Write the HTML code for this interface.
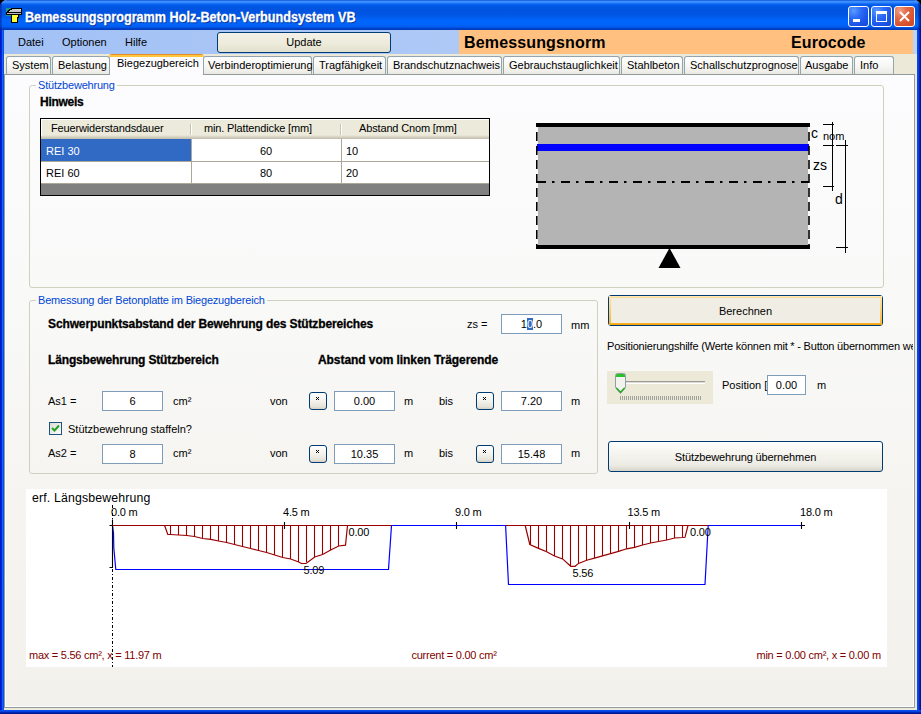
<!DOCTYPE html>
<html><head><meta charset="utf-8">
<style>
*{box-sizing:border-box}
html,body{margin:0;padding:0;width:921px;height:714px;overflow:hidden;background:#000}
body{position:relative;font-family:"Liberation Sans",sans-serif;font-size:11px;color:#000}
.a{position:absolute}
.t{position:absolute;white-space:pre;line-height:13px;font-size:11px}
.b{font-weight:bold;-webkit-text-stroke-width:0.3px}
#win{position:absolute;left:0;top:0;width:921px;height:714px;border-radius:7px 7px 0 0;overflow:hidden;
 background:linear-gradient(to right,#0019cf 0,#0019cf 1px,#0028d8 1px,#0028d8 2px,#1464f0 2px,#1464f0 3px,#0a4fe6 3px,#0a4fe6 4px,#ece9d8 4px,#ece9d8 917px,#0848f0 917px,#0848f0 918px,#0640e6 918px,#0640e6 919px,#0025b8 919px,#0025b8 920px,#001590 920px)}
#title{position:absolute;left:0;top:0;width:921px;height:30px;
 background:linear-gradient(to bottom,#0042c8 0,#3d8cff 1px,#3d95ff 2px,#2a7dff 3px,#0a64f0 4px,#0058e6 6px,#0053df 10px,#0055e3 14px,#005cec 17px,#0066ff 21px,#0063f8 25px,#005cf0 27px,#0049d6 28px,#003dbd 29px,#003dbd 30px)}
#client{position:absolute;left:4px;top:30px;width:913px;height:680px;background:#ece9d8}
#bottomframe{position:absolute;left:0;top:710px;width:921px;height:4px;background:linear-gradient(to bottom,#0a4ff0 0,#0a4ff0 1px,#0640de 1px,#0640de 2px,#0026b8 2px,#0026b8 3px,#00168e 3px)}

.menu{position:absolute;left:4px;top:30px;width:913px;height:24px;background:linear-gradient(to right,#a2c1f5 0,#aec9f6 50%,#bcd3f8 100%)}
.tab{position:absolute;top:56px;height:18px;border:1px solid #91a4b0;border-bottom:none;border-radius:3px 3px 0 0;background:linear-gradient(to bottom,#fefefe 0,#f9f9f7 40%,#efeee9 85%,#e8e7e0 100%)}
.tab span{position:absolute;top:2px;line-height:13px;white-space:pre}
.tabsel{position:absolute;top:54px;height:21px;border:none;border-radius:3px 3px 0 0;background:#fcfcfe;z-index:3}
.tabsel:before{content:"";position:absolute;left:-1px;right:-1px;top:0;height:3px;border-radius:3px 3px 0 0;background:linear-gradient(to bottom,#e68b2c 0,#e68b2c 1px,#ffc73c 1px,#ffc73c 3px)}
.panel{position:absolute;left:4px;top:74px;width:911px;height:634px;border:1px solid #919b9c;box-shadow:inset 1px 0 0 #fff,inset -1px -1px 0 #fff;background:linear-gradient(to bottom,#fcfcfe 0,#f9f9f8 35%,#f5f4f0 70%,#f2f1ec 100%);z-index:2}
.btn{position:absolute;border:1px solid #003c74;border-radius:3px;background:linear-gradient(to bottom,#fff 0,#f7f6f1 30%,#ecebe4 80%,#d8d3c8 100%)}
.btn span{position:absolute;left:0;right:0;text-align:center;white-space:pre;line-height:13px}

.grp{position:absolute;border:1px solid #d0d0bf;border-radius:3px;z-index:4}
.gt{position:absolute;white-space:pre;line-height:13px;color:#0046d5;padding:0 2px;z-index:5}
.z{z-index:6}
.inp{position:absolute;border:1px solid #7f9db9;background:#fff;z-index:6}
.inp span{position:absolute;left:0;right:0;text-align:center;white-space:pre;line-height:13px}

.sb{position:absolute;width:18px;height:18px;border:1px solid #003c74;border-radius:3px;background:linear-gradient(to bottom,#fff 0,#f3f2ec 50%,#e6e3d8 85%,#d6d0c5 100%);z-index:6}
.sb span{position:absolute;left:0;right:0;top:1px;text-align:center;font-size:10px;line-height:10px}
</style></head><body>
<div id="win">
 <div id="title"><div class="a" style="left:0;top:0;width:2px;height:30px;background:linear-gradient(to right,rgba(0,0,110,.45),rgba(0,0,110,.2))"></div><div class="a" style="left:918px;top:0;width:3px;height:30px;background:linear-gradient(to right,rgba(0,0,110,.15),rgba(0,0,90,.5) 50%,rgba(0,0,70,.7))"></div></div>

 <svg class="a" style="left:0;top:0" width="30" height="30" viewBox="0 0 30 30" shape-rendering="crispEdges">
  <rect x="6" y="8" width="5" height="8" fill="#1e9a8c"/>
  <path d="M11 8H22V15H6V12H7V11H8V10H9V9H11Z" fill="#000"/>
  <path d="M12 9H21V12H9V11H10V10H12Z" fill="#c8c8c8"/>
  <path d="M15 9H21V10H15Z" fill="#dcd6cc"/>
  <rect x="7" y="13" width="14" height="1" fill="#bdbdbd"/>
  <path d="M11 15H19V18H18V23H11Z" fill="#000"/>
  <path d="M12 15H18V17H17V22H12Z" fill="#ffff30"/>
 </svg>
 <div class="t b" style="left:26px;top:10px;font-size:14px;line-height:16px;color:#0a1a60;opacity:.6;transform-origin:0 0;transform:scaleX(0.902)">Bemessungsprogramm Holz-Beton-Verbundsystem VB</div>
 <div class="t b" style="left:25px;top:9px;font-size:14px;line-height:16px;color:#fff;transform-origin:0 0;transform:scaleX(0.902)">Bemessungsprogramm Holz-Beton-Verbundsystem VB</div>
 <div class="a" style="left:848px;top:6px;width:21px;height:21px;border:1px solid #fff;border-radius:3px;background:radial-gradient(circle at 25% 20%,#5a9bff 0,#2c6cf6 35%,#1a54e8 70%,#1648d0 100%)">
   <div class="a" style="left:4px;top:12px;width:7px;height:3px;background:#fff"></div></div>
 <div class="a" style="left:871px;top:6px;width:21px;height:21px;border:1px solid #fff;border-radius:3px;background:radial-gradient(circle at 25% 20%,#5a9bff 0,#2c6cf6 35%,#1a54e8 70%,#1648d0 100%)">
   <div class="a" style="left:4px;top:4px;width:11px;height:11px;border:1px solid #fff;border-top-width:3px"></div></div>
 <div class="a" style="left:894px;top:6px;width:21px;height:21px;border:1px solid #fff;border-radius:3px;background:radial-gradient(circle at 25% 20%,#f0a088 0,#e26a46 35%,#d8512c 70%,#c84a20 100%)">
   <svg class="a" style="left:4px;top:4px" width="11" height="11" viewBox="0 0 11 11"><path d="M1 1L10 10M10 1L1 10" stroke="#fff" stroke-width="2"/></svg></div>
 <div id="client"></div>

 <div class="menu"></div>
 <div class="t" style="left:18px;top:36px">Datei</div>
 <div class="t" style="left:62px;top:36px">Optionen</div>
 <div class="t" style="left:125px;top:36px">Hilfe</div>
 <div class="btn" style="left:217px;top:32px;width:174px;height:21px;background:linear-gradient(to bottom,#f4f2e9 0,#ecead9 60%,#e2dfcf 100%)"><span style="top:3px">Update</span></div>
 <div class="a" style="left:459px;top:30px;width:454px;height:24px;background:#ffc080"></div>
 <div class="t" style="left:464px;top:33px;font-size:16px;line-height:20px;font-weight:bold;letter-spacing:0.15px">Bemessungsnorm</div>
 <div class="t" style="left:791px;top:33px;font-size:16px;line-height:20px;font-weight:bold;letter-spacing:0.1px">Eurocode</div>
 <div class="tab" style="left:6px;width:45px"><span style="left:5px">System</span></div>
 <div class="tab" style="left:52px;width:58px"><span style="left:5px">Belastung</span></div>
 <div class="tabsel" style="left:110px;width:93px"><span class="t" style="left:7px;top:3px">Biegezugbereich</span></div>
 <div class="tab" style="left:203px;width:109px"><span style="left:4px">Verbinderoptimierung</span></div>
 <div class="tab" style="left:313px;width:73px"><span style="left:5px">Tragfähigkeit</span></div>
 <div class="tab" style="left:387px;width:115px"><span style="left:5px">Brandschutznachweis</span></div>
 <div class="tab" style="left:503px;width:117px"><span style="left:5px">Gebrauchstauglichkeit</span></div>
 <div class="tab" style="left:621px;width:62px"><span style="left:5px">Stahlbeton</span></div>
 <div class="tab" style="left:684px;width:115px"><span style="left:5px">Schallschutzprognose</span></div>
 <div class="tab" style="left:800px;width:53px"><span style="left:4px">Ausgabe</span></div>
 <div class="tab" style="left:854px;width:40px"><span style="left:5px">Info</span></div>
 <div class="panel" id="panel"></div>

 <div class="grp" style="left:29px;top:85px;width:855px;height:203px"></div>
 <div class="gt" style="left:36px;top:79px;background:#fcfcfe;letter-spacing:-0.2px">Stützbewehrung</div>
 <div class="t b z" style="left:40px;top:96px;font-size:12px;letter-spacing:-0.28px">Hinweis</div>
 <div class="a z" style="left:40px;top:118px;width:450px;height:78px;border:1px solid #000;background:#808080">
   <div class="a" style="left:0;top:0;width:448px;height:20px;background:linear-gradient(to bottom,#fff 0,#fff 1px,#ebeadb 1px,#ebeadb 16px,#e2dece 17px,#d6d2c2 18px,#cbc7b8 19px,#c0bcab 20px)"></div><div class="a" style="left:0;top:0;width:1px;height:17px;background:#fff"></div>
   <div class="a" style="left:149px;top:5px;width:1px;height:11px;background:#c7c5b2"></div>
   <div class="a" style="left:150px;top:5px;width:1px;height:11px;background:#fff"></div>
   <div class="a" style="left:299px;top:5px;width:1px;height:11px;background:#c7c5b2"></div>
   <div class="a" style="left:300px;top:5px;width:1px;height:11px;background:#fff"></div>
   <div class="t" style="left:10px;top:3px;letter-spacing:-0.15px">Feuerwiderstandsdauer</div>
   <div class="t" style="left:163px;top:3px;letter-spacing:-0.15px">min. Plattendicke [mm]</div>
   <div class="t" style="left:318px;top:3px;letter-spacing:-0.15px">Abstand Cnom [mm]</div>
   <div class="a" style="left:0;top:20px;width:448px;height:44px;background:#fff"></div>
   <div class="a" style="left:0;top:20px;width:150px;height:22px;background:#316ac5"></div>
   <div class="a" style="left:150px;top:20px;width:1px;height:44px;background:#aca899"></div>
   <div class="a" style="left:300px;top:20px;width:1px;height:44px;background:#aca899"></div>
   <div class="a" style="left:0;top:42px;width:448px;height:1px;background:#aca899"></div>
   <div class="a" style="left:0;top:64px;width:448px;height:1px;background:#aca899"></div>
   <div class="t" style="left:5px;top:26px;color:#fff">REI 30</div>
   <div class="t" style="left:150px;width:150px;top:26px;text-align:center">60</div>
   <div class="t" style="left:305px;top:26px">10</div>
   <div class="t" style="left:5px;top:48px">REI 60</div>
   <div class="t" style="left:150px;width:150px;top:48px;text-align:center">80</div>
   <div class="t" style="left:305px;top:48px">20</div>
 </div>
 <svg class="a z" style="left:520px;top:110px" width="340" height="165" viewBox="520 110 340 165">
  <rect x="538" y="124" width="270" height="122" fill="#b4b4b4"/>
  <rect x="536" y="123" width="274" height="4" fill="#000"/>
  <rect x="536" y="245" width="274" height="4" fill="#000"/>
  <rect x="537" y="144" width="272" height="7" fill="#0000ff"/>
  <line x1="536.8" y1="126" x2="536.8" y2="245" stroke="#000" stroke-width="1.6" stroke-dasharray="9 5" stroke-dashoffset="8"/>
  <line x1="809" y1="126" x2="809" y2="245" stroke="#000" stroke-width="1.6" stroke-dasharray="9 5" stroke-dashoffset="8"/>
  <line x1="537" y1="182" x2="809" y2="182" stroke="#000" stroke-width="2" stroke-dasharray="9 6 2.5 6.5"/>
  <path d="M669.5 248 L680.5 268 L658.5 268 Z" fill="#000"/>
  <g stroke="#000" stroke-width="1" fill="none">
   <line x1="832.5" y1="122" x2="832.5" y2="191"/>
   <line x1="823" y1="124.5" x2="834" y2="124.5"/>
   <line x1="823" y1="145.5" x2="834" y2="145.5"/>
   <line x1="823" y1="186.5" x2="834" y2="186.5"/>
   <line x1="845.5" y1="140" x2="845.5" y2="253"/>
   <line x1="836" y1="145.5" x2="848" y2="145.5"/>
   <line x1="836" y1="247.5" x2="848" y2="247.5"/>
  </g>
  <text x="811" y="138" font-family="Liberation Sans" font-size="14">c</text>
  <text x="823" y="140" font-family="Liberation Sans" font-size="11">nom</text>
  <text x="813" y="170" font-family="Liberation Sans" font-size="14">zs</text>
  <text x="835" y="204" font-family="Liberation Sans" font-size="14">d</text>
 </svg>

 <div class="grp" style="left:29px;top:300px;width:569px;height:174px"></div>
 <div class="gt" style="left:36px;top:294px;background:#f9f9f8;letter-spacing:-0.2px">Bemessung der Betonplatte im Biegezugbereich</div>
 <div class="t b z" style="left:48px;top:318px;font-size:12px;letter-spacing:-0.12px">Schwerpunktsabstand der Bewehrung des Stützbereiches</div>
 <div class="t z" style="left:467px;top:318px">zs =</div>
 <div class="inp" style="left:501px;top:314px;width:61px;height:20px"><span style="top:3px"><span style="position:static">1</span><span style="position:static;background:#316ac5;color:#fff">0</span><span style="position:static">.0</span></span></div>
 <div class="t z" style="left:571px;top:319px">mm</div>
 <div class="t b z" style="left:48px;top:354px;font-size:12px;letter-spacing:-0.15px">Längsbewehrung Stützbereich</div>
 <div class="t b z" style="left:318px;top:354px;font-size:12px;letter-spacing:-0.07px">Abstand vom linken Trägerende</div>

 <div class="t z" style="left:48px;top:395px">As1 =</div>
 <div class="inp" style="left:102px;top:391px;width:61px;height:20px"><span style="top:3px">6</span></div>
 <div class="t z" style="left:173px;top:395px">cm²</div>
 <div class="t z" style="left:270px;top:395px">von</div>
 <div class="sb" style="left:309px;top:392px"><svg class="a" style="left:6px;top:4px" width="5" height="5" viewBox="0 0 5 5" shape-rendering="crispEdges"><path d="M0 0h1v1h-1z M2 0h1v1h-1z M1 1h1v1h-1z M0 2h1v1h-1z M2 2h1v1h-1z" fill="#000"/></svg></div>
 <div class="inp" style="left:334px;top:391px;width:61px;height:20px"><span style="top:3px">0.00</span></div>
 <div class="t z" style="left:404px;top:395px">m</div>
 <div class="t z" style="left:439px;top:395px">bis</div>
 <div class="sb" style="left:476px;top:392px"><svg class="a" style="left:6px;top:4px" width="5" height="5" viewBox="0 0 5 5" shape-rendering="crispEdges"><path d="M0 0h1v1h-1z M2 0h1v1h-1z M1 1h1v1h-1z M0 2h1v1h-1z M2 2h1v1h-1z" fill="#000"/></svg></div>
 <div class="inp" style="left:501px;top:391px;width:61px;height:20px"><span style="top:3px">7.20</span></div>
 <div class="t z" style="left:571px;top:395px">m</div>

 <div class="a z" style="left:49px;top:422px;width:13px;height:13px;border:1px solid #1c5180;background:linear-gradient(135deg,#dcdcd7 0,#fcfcfb 100%)">
  <svg class="a" style="left:1px;top:1px" width="9" height="9" viewBox="0 0 9 9"><path d="M1 4 L3.5 6.5 L8 1.5" stroke="#21a121" stroke-width="2" fill="none"/></svg></div>
 <div class="t z" style="left:68px;top:423px">Stützbewehrung staffeln?</div>

 <div class="t z" style="left:48px;top:447px">As2 =</div>
 <div class="inp" style="left:102px;top:444px;width:61px;height:20px"><span style="top:3px">8</span></div>
 <div class="t z" style="left:173px;top:447px">cm²</div>
 <div class="t z" style="left:270px;top:447px">von</div>
 <div class="sb" style="left:309px;top:445px"><svg class="a" style="left:6px;top:4px" width="5" height="5" viewBox="0 0 5 5" shape-rendering="crispEdges"><path d="M0 0h1v1h-1z M2 0h1v1h-1z M1 1h1v1h-1z M0 2h1v1h-1z M2 2h1v1h-1z" fill="#000"/></svg></div>
 <div class="inp" style="left:334px;top:444px;width:61px;height:20px"><span style="top:3px">10.35</span></div>
 <div class="t z" style="left:404px;top:447px">m</div>
 <div class="t z" style="left:439px;top:447px">bis</div>
 <div class="sb" style="left:476px;top:445px"><svg class="a" style="left:6px;top:4px" width="5" height="5" viewBox="0 0 5 5" shape-rendering="crispEdges"><path d="M0 0h1v1h-1z M2 0h1v1h-1z M1 1h1v1h-1z M0 2h1v1h-1z M2 2h1v1h-1z" fill="#000"/></svg></div>
 <div class="inp" style="left:501px;top:444px;width:61px;height:20px"><span style="top:3px">15.48</span></div>
 <div class="t z" style="left:571px;top:447px">m</div>

 <div class="btn z" style="left:608px;top:295px;width:275px;height:31px;background:#f0eee4"><div class="a" style="left:0;top:0;right:0;height:2px;background:linear-gradient(#ffedc2,#fdd890)"></div><div class="a" style="left:0;bottom:0;right:0;height:2px;background:linear-gradient(#f8b330,#f3a100)"></div><div class="a" style="left:0;top:2px;bottom:2px;width:2px;background:linear-gradient(#fee3a6,#f8b93c)"></div><div class="a" style="right:0;top:2px;bottom:2px;width:2px;background:linear-gradient(#fee3a6,#f8b93c)"></div><span style="top:9px">Berechnen</span></div>
 <div class="a z" style="left:607px;top:336px;width:306px;height:20px;overflow:hidden"><div class="t" style="left:0;top:4px;letter-spacing:-0.2px">Positionierungshilfe (Werte können mit * - Button übernommen werden)</div></div>
 <div class="a z" style="left:607px;top:371px;width:106px;height:33px;background:#ece9d8">
   <div class="a" style="left:18px;top:10px;width:80px;height:1px;background:#9d9c94"></div>
   <div class="a" style="left:18px;top:11px;width:80px;height:1px;background:#dcdbd3"></div>
   <div class="a" style="left:18px;top:12px;width:80px;height:1px;background:#fff"></div>
   <div class="a" style="left:13px;top:25px;width:81px;height:4px;background:repeating-linear-gradient(to right,#a3a29a 0,#a3a29a 1px,transparent 1px,transparent 2px)"></div>
   <svg class="a" style="left:8px;top:2px" width="12" height="22" viewBox="0 0 12 22"><path d="M0.5 2.5 Q0.5 0.5 2.5 0.5 H8.5 Q10.5 0.5 10.5 2.5 V14.5 L5.5 20.5 L0.5 14.5 Z" fill="#f2f2ee" stroke="#8d9eaa"/><path d="M1 1.5 Q1 1 2.5 1 H8.5 Q10 1 10 1.5 V4 H1Z" fill="#2cbf2c"/><path d="M1.2 14.8 L5.5 19.3 L9.8 14.8" stroke="#21a521" fill="none" stroke-width="1.4"/></svg>
 </div>
 <div class="t z" style="left:722px;top:379px">Position [m]</div>
 <div class="inp" style="left:767px;top:375px;width:39px;height:20px"><span style="top:3px">0.00</span></div>
 <div class="t z" style="left:817px;top:379px">m</div>
 <div class="btn z" style="left:608px;top:441px;width:275px;height:31px"><span style="top:9px;letter-spacing:-0.12px">Stützbewehrung übernehmen</span></div>

 <div class="a z" style="left:26px;top:489px;width:861px;height:178px;background:#fff"></div>
 <svg class="a z" style="left:26px;top:489px" width="861" height="178" viewBox="26 489 861 178" font-family="Liberation Sans" font-size="11">
  <text x="32" y="502" font-size="12.3" letter-spacing="0.15">erf. Längsbewehrung</text>
  <g fill="#000" letter-spacing="-0.2">
   <text x="111" y="516">0.0 m</text>
   <text x="283" y="516">4.5 m</text>
   <text x="455" y="516">9.0 m</text>
   <text x="627.5" y="516">13.5 m</text>
   <text x="800" y="516">18.0 m</text>
  </g>
  <line x1="112.5" y1="505" x2="112.5" y2="667" stroke="#000" stroke-dasharray="3 2 1 2"/>
  <polyline points="112.5,525.5 113.5,533 113.8,548 115.8,569.5 388.5,569.5 391.5,525.5 505.6,525.5 508.5,584.5 705,584.5 708.2,525.5 801.5,525.5" fill="none" stroke="#0000ff" stroke-width="1.2"/>
  <line x1="112" y1="525.5" x2="391.5" y2="525.5" stroke="#990000" stroke-width="1.2"/>
  <line x1="505.6" y1="525.5" x2="708.2" y2="525.5" stroke="#990000" stroke-width="1.2"/>
  <polyline points="164.6,525.5 167.8,534.5 170.4,534.5 178.6,535.0 186.7,535.5 194.5,536.5 202.6,538.5 210.8,539.3 218.6,541.0 226.7,542.5 234.5,544.5 242.5,546.5 250.6,548.5 258.6,550.5 266.6,552.5 274.7,555.0 282.7,557.5 290.7,559.0 298.7,562.0 301.5,563.5 306.0,563.5 314.7,557.0 322.6,554.5 330.7,550.0 338.7,546.0 345.5,545.2 347.5,525.5" fill="none" stroke="#990000" stroke-width="1.2"/>
  <polyline points="525.2,525.5 529.8,544.5 538.5,548.4 546.7,551.7 554.5,556.0 562.6,558.9 570.8,566.3 575.0,566.3 578.6,563.4 586.7,560.2 594.5,558.2 602.5,555.9 610.6,553.6 618.6,551.4 626.6,548.8 634.6,547.3 642.6,545.0 650.6,543.0 658.7,541.5 666.7,540.0 674.7,538.0 682.8,537.5 685.0,537.3 688.0,525.5" fill="none" stroke="#990000" stroke-width="1.2"/>
  <path d="M170.5 525.5V534.5 M178.5 525.5V535.0 M186.5 525.5V535.5 M194.5 525.5V536.5 M202.5 525.5V538.5 M210.5 525.5V539.3 M218.5 525.5V541.0 M226.5 525.5V542.5 M234.5 525.5V544.5 M242.5 525.5V546.5 M250.5 525.5V548.5 M258.5 525.5V550.5 M266.5 525.5V552.5 M274.5 525.5V555.0 M282.5 525.5V557.5 M290.5 525.5V559.0 M298.5 525.5V562.0 M306.5 525.5V562.1 M314.5 525.5V557.0 M322.5 525.5V554.4 M330.5 525.5V550.0 M338.5 525.5V546.0 M530.5 525.5V544.8 M538.5 525.5V548.4 M546.5 525.5V551.6 M554.5 525.5V556.0 M562.5 525.5V558.9 M570.5 525.5V566.0 M578.5 525.5V563.4 M586.5 525.5V560.3 M594.5 525.5V558.2 M602.5 525.5V555.9 M610.5 525.5V553.6 M618.5 525.5V551.4 M626.5 525.5V548.8 M634.5 525.5V547.3 M642.5 525.5V545.0 M650.5 525.5V543.0 M658.5 525.5V541.5 M666.5 525.5V540.0 M674.5 525.5V538.0 M682.5 525.5V537.5" stroke="#990000" stroke-width="1.1" fill="none"/>
  <path d="M112.5 519.5V568 M109.5 525.5H113 M109.5 567.5H113 M284.5 522V529 M456.5 522V529 M629.5 522V529 M801.5 522V529 M801.5 525.5H805" stroke="#000" stroke-width="1.1" fill="none"/>
  <g letter-spacing="-0.2">
  <text x="348.5" y="535.5">0.00</text>
  <text x="303.5" y="573.5">5.09</text>
  <text x="572.5" y="577">5.56</text>
  <text x="690" y="535.5">0.00</text>
  </g>
  <g fill="#800000" letter-spacing="-0.25">
   <text x="29" y="659">max = 5.56 cm², x = 11.97 m</text>
   <text x="411.5" y="659">current = 0.00 cm²</text>
   <text x="756.5" y="659">min = 0.00 cm², x = 0.00 m</text>
  </g>
 </svg>
 <div id="bottomframe"></div>
</div>
</body></html>
